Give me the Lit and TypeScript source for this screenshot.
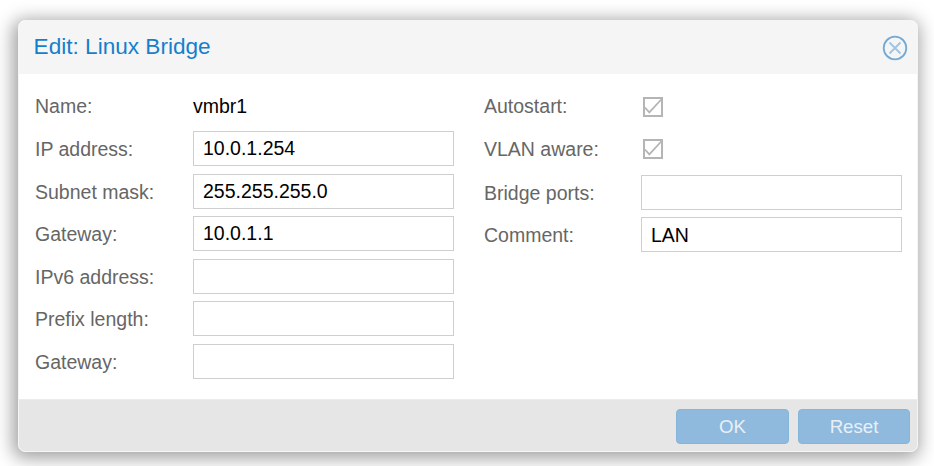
import { LitElement, html, css } from 'lit';
import { customElement } from 'lit/decorators.js';

type Field = { label: string; value?: string; kind: 'text' | 'input' | 'check' };

const LEFT: Field[] = [
  { label: 'Name:', value: 'vmbr1', kind: 'text' },
  { label: 'IP address:', value: '10.0.1.254', kind: 'input' },
  { label: 'Subnet mask:', value: '255.255.255.0', kind: 'input' },
  { label: 'Gateway:', value: '10.0.1.1', kind: 'input' },
  { label: 'IPv6 address:', kind: 'input' },
  { label: 'Prefix length:', kind: 'input' },
  { label: 'Gateway:', kind: 'input' },
];

const RIGHT: Field[] = [
  { label: 'Autostart:', kind: 'check' },
  { label: 'VLAN aware:', kind: 'check' },
  { label: 'Bridge ports:', kind: 'input' },
  { label: 'Comment:', value: 'LAN', kind: 'input' },
];

@customElement('app-root')
export class AppRoot extends LitElement {
  static styles = css`
    :host {
      display: block;
      width: 934px;
      height: 466px;
      padding: 20px 16px 14px 18px;
      box-sizing: border-box;
      background: #fff;
      font-family: 'Liberation Sans', Arial, sans-serif;
      overflow: hidden;
    }
    .window {
      width: 900px;
      height: 432px;
      box-sizing: border-box;
      display: flex;
      flex-direction: column;
      background: #fff;
      border: 1px solid #f5f5f5;
      border-radius: 7px;
      overflow: hidden;
      box-shadow: -2px 3px 18px 3px rgba(0, 0, 0, 0.38);
    }
    .header {
      height: 53px;
      flex: none;
      display: flex;
      align-items: center;
      justify-content: space-between;
      padding: 0 9px 0 14.6px;
      background: #f5f5f5;
    }
    .title {
      font-size: 22.6px;
      color: #157fcc;
      padding-bottom: 2px;
    }
    .close {
      display: block;
      width: 26px;
      height: 26px;
    }
    .body {
      flex: 1;
      display: flex;
      padding: 14.7px 15px 0 16px;
      gap: 30px;
    }
    .col {
      display: flex;
      flex-direction: column;
      gap: 7.5px;
    }
    .col.left {
      width: 419px;
    }
    .col.right {
      width: 418px;
    }
    .col.right .row:nth-child(3) {
      margin-top: 1px;
    }
    .col.right .input {
      line-height: 34px;
    }
    .row {
      display: flex;
      align-items: center;
      height: 35px;
      font-size: 19.5px;
      color: #666;
    }
    .label {
      flex: none;
      width: 158px;
    }
    .row:not(:first-child) .label {
      padding-top: 2px;
    }
    .col.right .label {
      width: 157px;
    }
    .text {
      color: #000;
    }
    .input {
      flex: 1;
      height: 100%;
      box-sizing: border-box;
      border: 1px solid #cfcfcf;
      background: #fff;
      color: #000;
      font-size: 19.5px;
      line-height: 32px;
      padding: 0 9px;
    }
    .check {
      display: block;
      width: 22px;
      height: 22px;
      margin-top: 1px;
    }
    .footer {
      height: 52px;
      flex: none;
      box-sizing: border-box;
      display: flex;
      justify-content: flex-end;
      align-items: flex-start;
      gap: 9px;
      padding: 9px 7px 0 0;
      background: #e6e6e6;
      border-top: 1px solid #ececec;
    }
    .btn {
      height: 35px;
      box-sizing: border-box;
      border: 1px solid #84b5da;
      border-radius: 4px;
      background: #8fbadd;
      color: #e8f0f7;
      font-size: 18.67px;
      text-align: center;
      line-height: 33px;
    }
    .ok {
      width: 113px;
    }
    .reset {
      width: 112px;
    }
  `;

  renderField(f: Field) {
    return html`
      <div class="row">
        <span class="label">${f.label}</span>
        ${f.kind === 'text' ? html`<span class="text">${f.value}</span>` : ''}
        ${f.kind === 'input' ? html`<div class="input">${f.value ?? ''}</div>` : ''}
        ${f.kind === 'check'
          ? html`<svg class="check" viewBox="0 0 22 22" fill="none">
              <rect x="3" y="2" width="18" height="18" stroke="#b5b5b5" stroke-width="2" />
              <path d="M4 11.5 L8.3 16.3 L20.7 3" stroke="#b5b5b5" stroke-width="1.8" />
            </svg>`
          : ''}
      </div>
    `;
  }

  render() {
    return html`
      <div class="window">
        <div class="header">
          <span class="title">Edit: Linux Bridge</span>
          <svg class="close" viewBox="0 0 26 26" fill="none">
            <circle cx="13" cy="13" r="11.3" stroke="#74a9d4" stroke-width="1.8" />
            <path d="M7.5 7.5 L18.5 18.5 M18.5 7.5 L7.5 18.5" stroke="#9fc3e2" stroke-width="1.8" />
          </svg>
        </div>
        <div class="body">
          <div class="col left">${LEFT.map((f) => this.renderField(f))}</div>
          <div class="col right">${RIGHT.map((f) => this.renderField(f))}</div>
        </div>
        <div class="footer">
          <div class="btn ok">OK</div>
          <div class="btn reset">Reset</div>
        </div>
      </div>
    `;
  }
}
